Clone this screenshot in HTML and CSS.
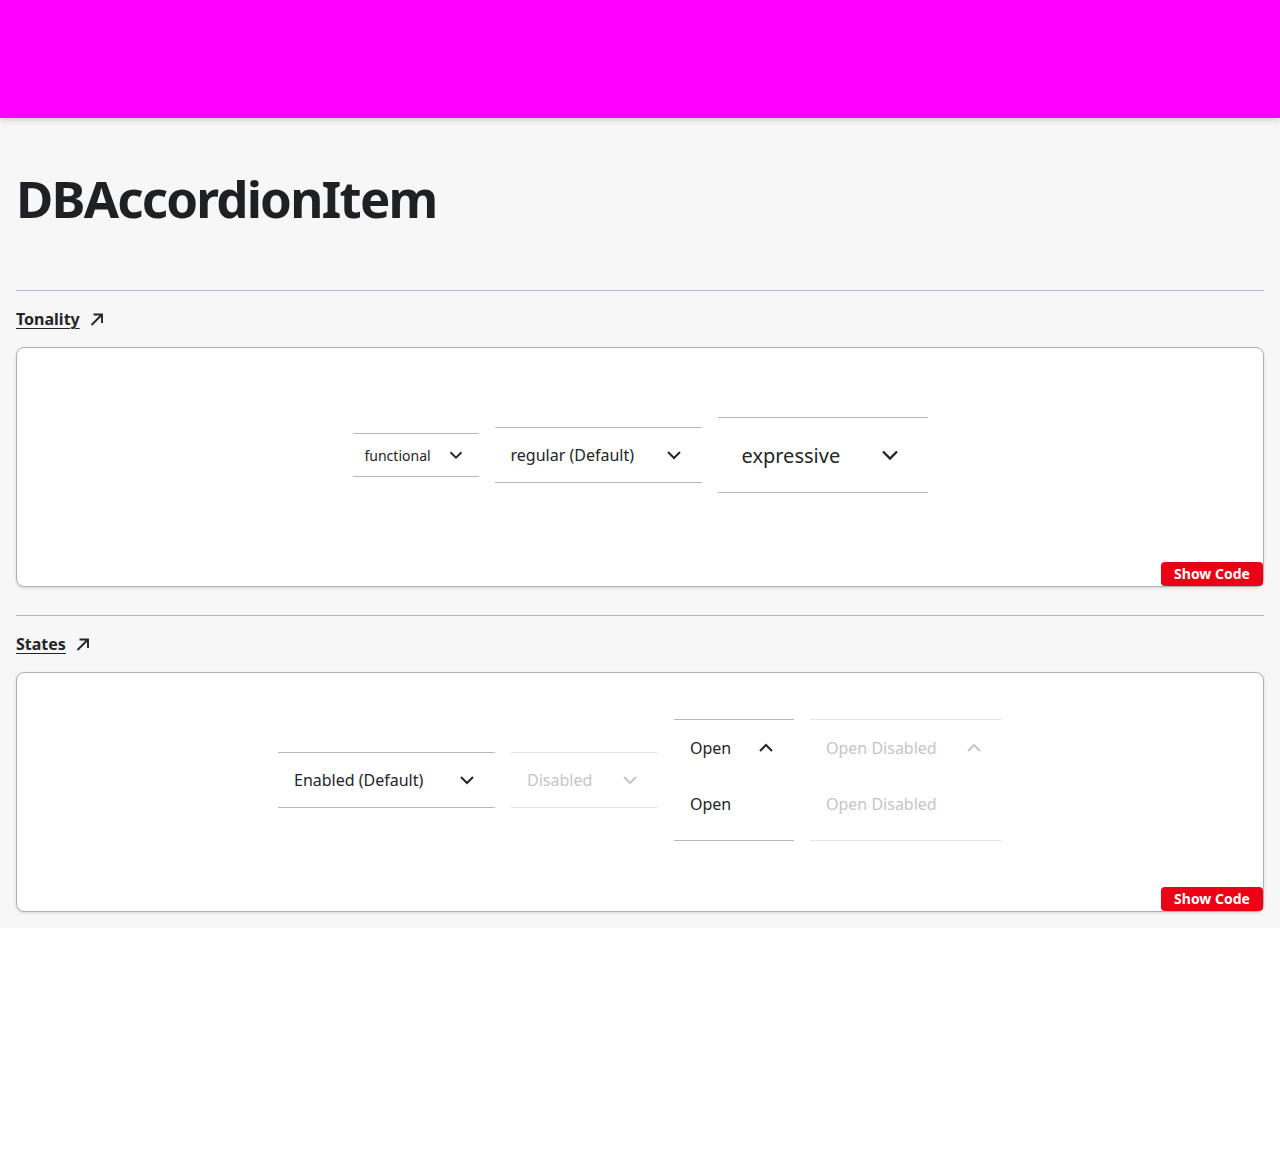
FILE: index.html
```html
<!DOCTYPE html>
<html lang="en">
<head>
<meta charset="utf-8">
<title>DBAccordionItem</title>
<link rel="stylesheet" href="styles.css">
</head>
<body>
<header class="topbar"></header>
<main class="page">
  <h1 class="title">DBAccordionItem</h1>

  <section class="example">
    <div class="divider"></div>
    <a class="ex-link" href="#">Tonality<svg class="ext" viewBox="0 0 16 16" width="16" height="16"><path d="M2.5 14L13 3.5M4.5 3.5H13V12" fill="none" stroke="currentColor" stroke-width="1.9"/></svg></a>
    <div class="card">
      <div class="stage">
        <div class="acc t-functional">
          <div class="acc-head"><span class="acc-label">functional</span><svg class="chev" viewBox="0 0 24 24"><path d="M6 9l6 6 6-6" fill="none" stroke="currentColor" stroke-width="2"/></svg></div>
        </div>
        <div class="acc t-regular">
          <div class="acc-head"><span class="acc-label">regular (Default)</span><svg class="chev" viewBox="0 0 24 24"><path d="M6 9l6 6 6-6" fill="none" stroke="currentColor" stroke-width="2"/></svg></div>
        </div>
        <div class="acc t-expressive">
          <div class="acc-head"><span class="acc-label">expressive</span><svg class="chev" viewBox="0 0 24 24"><path d="M6 9l6 6 6-6" fill="none" stroke="currentColor" stroke-width="2"/></svg></div>
        </div>
      </div>
      <div class="card-foot"><button class="show-code">Show Code</button></div>
    </div>
  </section>

  <section class="example">
    <div class="divider"></div>
    <a class="ex-link" href="#">States<svg class="ext" viewBox="0 0 16 16" width="16" height="16"><path d="M2.5 14L13 3.5M4.5 3.5H13V12" fill="none" stroke="currentColor" stroke-width="1.9"/></svg></a>
    <div class="card">
      <div class="stage">
        <div class="acc t-regular w-enabled">
          <div class="acc-head"><span class="acc-label">Enabled (Default)</span><svg class="chev" viewBox="0 0 24 24"><path d="M6 9l6 6 6-6" fill="none" stroke="currentColor" stroke-width="2"/></svg></div>
        </div>
        <div class="acc t-regular is-disabled w-disabled">
          <div class="acc-head"><span class="acc-label">Disabled</span><svg class="chev" viewBox="0 0 24 24"><path d="M6 9l6 6 6-6" fill="none" stroke="currentColor" stroke-width="2"/></svg></div>
        </div>
        <div class="acc t-regular is-open w-open">
          <div class="acc-head"><span class="acc-label">Open</span><svg class="chev" viewBox="0 0 24 24"><path d="M6 15l6-6 6 6" fill="none" stroke="currentColor" stroke-width="2"/></svg></div>
          <div class="acc-body">Open</div>
        </div>
        <div class="acc t-regular is-open is-disabled w-opendis">
          <div class="acc-head"><span class="acc-label">Open Disabled</span><svg class="chev" viewBox="0 0 24 24"><path d="M6 15l6-6 6 6" fill="none" stroke="currentColor" stroke-width="2"/></svg></div>
          <div class="acc-body">Open Disabled</div>
        </div>
      </div>
      <div class="card-foot"><button class="show-code">Show Code</button></div>
    </div>
  </section>
</main>
</body>
</html>
```

FILE: styles.css
```css
* { box-sizing: border-box; }

html, body {
  margin: 0;
  padding: 0;
  background: #ffffff;
  font-family: "Noto Sans", "Open Sans", sans-serif;
  color: #232529;
}

.topbar {
  height: 118px;
  background: #ff00ff;
  box-shadow: 0 2px 6px rgba(0, 0, 0, 0.18);
  position: relative;
  z-index: 1;
}

.page {
  background: #f7f7f7;
  padding: 0 16px 16px;
}

.title {
  margin: 0;
  padding: 45px 0 57px;
  font-size: 51px;
  line-height: 70px;
  font-weight: 700;
  letter-spacing: -1.8px;
  color: #1f2023;
}

.example { display: flex; flex-direction: column; }
.example + .example { margin-top: 28px; }

.divider {
  height: 1px;
  background: #b4b6c4;
}

.ex-link {
  display: inline-flex;
  align-self: flex-start;
  align-items: center;
  gap: 9px;
  margin: 16px 0;
  height: 24px;
  font-size: 16px;
  font-weight: 700;
  color: #232529;
  text-decoration: underline;
  text-underline-offset: 3px;
  text-decoration-thickness: 1px;
}
.ext { display: block; }

.card {
  height: 240px;
  background: #ffffff;
  border: 1px solid #aeb0bc;
  border-radius: 8px;
  box-shadow: 0 1px 3px rgba(0, 0, 0, 0.14);
  display: flex;
  flex-direction: column;
}

.stage {
  flex: 1;
  display: flex;
  justify-content: center;
  align-items: center;
  gap: 16px;
}

.card-foot {
  display: flex;
  justify-content: flex-end;
  height: 24px;
}

.show-code {
  border: 0;
  background: #ec0016;
  color: #fff;
  font-family: "Noto Sans", "Open Sans", sans-serif;
  font-weight: 700;
  font-size: 14px;
  height: 24px;
  width: 102px;
  padding: 0;
  border-radius: 4px;
  line-height: 24px;
}

.acc {
  border-top: 1px solid #b4b6c4;
  border-bottom: 1px solid #b4b6c4;
  color: #232529;
}

.acc-head {
  display: flex;
  align-items: center;
  justify-content: space-between;
}

.chev { display: block; flex: none; }

.t-functional .acc-head { height: 42px; padding: 0 12px; font-size: 14px; }
.t-functional .chev { width: 22px; height: 22px; }
.t-functional { width: 126px; }

.t-regular .acc-head { height: 54px; padding: 0 16px; font-size: 16px; }
.t-regular .chev { width: 24px; height: 24px; }
.t-functional + .t-regular { width: 207px; }

.t-expressive { width: 210px; }
.t-expressive .acc-head { height: 74px; padding: 0 24px; font-size: 20px; }
.t-expressive .chev { width: 28px; height: 28px; }

.w-enabled { width: 217px; }
.w-disabled { width: 147px; }
.w-open { width: 120px; }
.w-opendis { width: 192px; }

.is-open .acc-head { height: 56px; }
.acc-body {
  padding: 16px 16px 24px;
  font-size: 16px;
  line-height: 24px;
}

.is-disabled {
  color: #c4c5cb;
  border-color: #e6e7ea;
}
```
